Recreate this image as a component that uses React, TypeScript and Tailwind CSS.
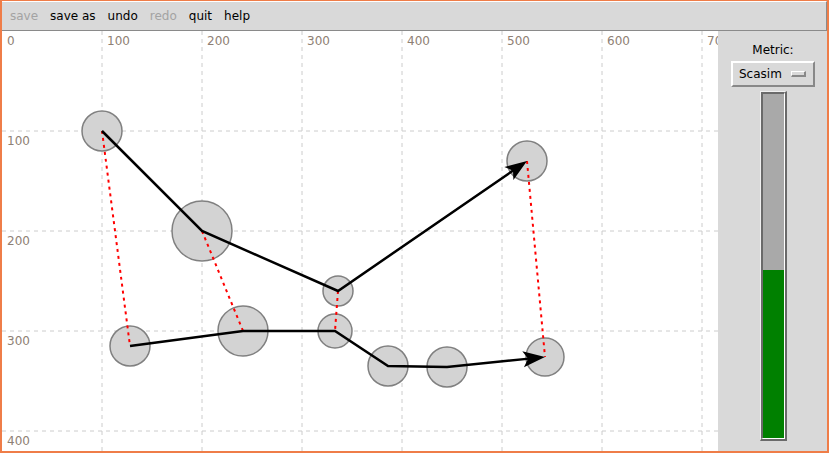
const nodes: { x: number; y: number; r: number }[] = [
  { x: 100, y: 100, r: 20 },
  { x: 200, y: 200, r: 30 },
  { x: 336, y: 260, r: 15 },
  { x: 333, y: 300, r: 17 },
  { x: 386, y: 335, r: 20 },
  { x: 445, y: 336, r: 20 },
  { x: 543, y: 326, r: 19 },
  { x: 525, y: 130, r: 20 },
  { x: 128, y: 315, r: 20 },
  { x: 241, y: 300, r: 25 },
];

const paths: number[][][] = [
  [
    [100, 100],
    [200, 200],
    [336, 260],
    [525, 130],
  ],
  [
    [128, 315],
    [241, 300],
    [333, 300],
    [386, 335],
    [445, 336],
    [543, 326],
  ],
];

const links: number[][] = [
  [100, 100, 128, 315],
  [200, 200, 241, 300],
  [336, 260, 333, 300],
  [525, 130, 543, 326],
];

// arrowhead polygon with the tip at (x2, y2)
const arrow = (x1: number, y1: number, x2: number, y2: number) => {
  const len = 22;
  const half = 8;
  const back = 17;
  const dx = x2 - x1;
  const dy = y2 - y1;
  const d = Math.hypot(dx, dy);
  const ux = dx / d;
  const uy = dy / d;
  const bx = x2 - ux * len;
  const by = y2 - uy * len;
  const nx = x2 - ux * back;
  const ny = y2 - uy * back;
  return `${x2},${y2} ${bx - uy * half},${by + ux * half} ${nx},${ny} ${bx + uy * half},${by - ux * half}`;
};

const MenuItem = ({ label, off }: { label: string; off?: boolean }) => (
  <span className={off ? "text-[#a3a3a3]" : "text-black"}>{label}</span>
);

const Canvas = () => {
  const xs = [100, 200, 300, 400, 500, 600, 700];
  const ys = [100, 200, 300, 400];
  return (
    <svg width={716} height={420} className="block bg-white" style={{ fontFamily: "'DejaVu Sans', sans-serif" }}>
      {xs.map((x) => (
        <line key={`x${x}`} x1={x} y1={0} x2={x} y2={420} stroke="#cccccc" strokeDasharray="4 4" />
      ))}
      {ys.map((y) => (
        <line key={`y${y}`} x1={0} y1={y} x2={716} y2={y} stroke="#cccccc" strokeDasharray="4 4" />
      ))}
      {[0, ...xs].map((x) => (
        <text key={`lx${x}`} x={x + 5} y={14} fontSize={12} fill="#8e8074">
          {x}
        </text>
      ))}
      {ys.map((y) => (
        <text key={`ly${y}`} x={5} y={y + 14} fontSize={12} fill="#8e8074">
          {y}
        </text>
      ))}
      {nodes.map((n, i) => (
        <circle key={i} cx={n.x} cy={n.y} r={n.r} fill="#d3d3d3" stroke="#808080" strokeWidth={1.5} />
      ))}
      {links.map(([x1, y1, x2, y2], i) => (
        <line key={`r${i}`} x1={x1} y1={y1} x2={x2} y2={y2} stroke="#ff0000" strokeWidth={2} strokeDasharray="3 4" />
      ))}
      {paths.map((p, i) => {
        const [ax, ay] = p[p.length - 2];
        const [bx, by] = p[p.length - 1];
        const d = Math.hypot(bx - ax, by - ay);
        const ex = bx - ((bx - ax) / d) * 16;
        const ey = by - ((by - ay) / d) * 16;
        const pts = [...p.slice(0, -1), [ex, ey]].map((q) => q.join(",")).join(" ");
        return (
          <g key={`p${i}`}>
            <polyline points={pts} fill="none" stroke="#000" strokeWidth={2.5} />
            <polygon points={arrow(ax, ay, bx, by)} fill="#000" />
          </g>
        );
      })}
    </svg>
  );
};

const App = () => {
  return (
    <div
      className="w-[829px] h-[453px] bg-[#d9d9d9] border-[#ef7d48] border-l-2 border-r-2 border-b-2 border-t flex flex-col overflow-hidden"
      style={{ fontFamily: "'DejaVu Sans', sans-serif" }}
    >
      <div className="h-[30px] shrink-0 flex items-center gap-[12px] px-[8px] text-[12px] bg-[#d9d9d9] border-t border-white border-b border-b-[#8a8a8a] border-r border-r-[#8a8a8a]">
        <MenuItem label="save" off />
        <MenuItem label="save as" />
        <MenuItem label="undo" />
        <MenuItem label="redo" off />
        <MenuItem label="quit" />
        <MenuItem label="help" />
      </div>
      <div className="flex flex-1 min-h-0">
        <Canvas />
        <div className="flex-1 flex flex-col items-center pt-[11px] border-l border-[#d9d9d9]">
          <div className="text-[12px] text-black leading-[16px]">Metric:</div>
          <div className="mt-[3px] w-[84px] h-[26px] flex items-center justify-between pl-[6px] pr-[7px] bg-[#d9d9d9] border-t-2 border-l-2 border-white border-b-2 border-r-2 border-b-[#888888] border-r-[#888888] text-[12px] text-black">
            <span>Scasim</span>
            <span className="w-[15px] h-[6px] bg-[#d9d9d9] border-t border-l border-white border-b-2 border-r-2 border-b-[#888888] border-r-[#888888]" />
          </div>
          <div className="mt-[4px] w-[27px] h-[350px] border-t border-l border-[#f0f0f0] border-r-2 border-r-[#6a6a6a] border-b-2 border-b-[#6a6a6a] flex">
            <div className="flex-1 flex flex-col border-t-2 border-l-2 border-[#6a6a6a] border-r border-r-white border-b border-b-white">
              <div className="h-[176px] bg-[#a9a9a9]" />
              <div className="flex-1 bg-[#008000]" />
            </div>
          </div>
        </div>
      </div>
    </div>
  );
};

export default App;
